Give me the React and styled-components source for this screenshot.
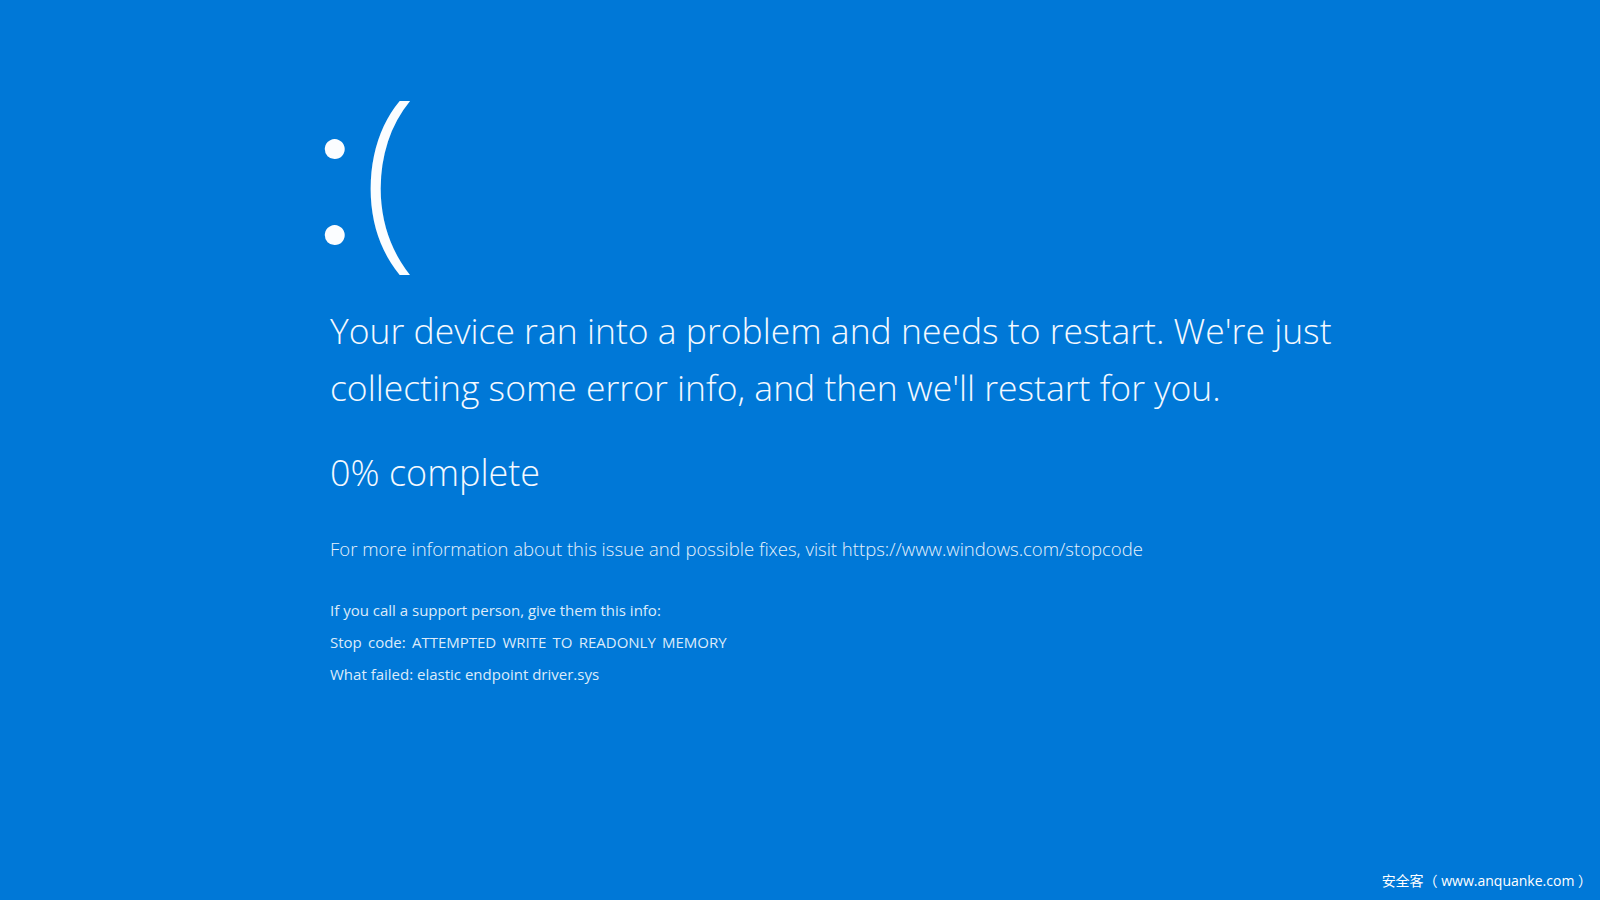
import styled, { createGlobalStyle } from 'styled-components'

const GlobalStyle = createGlobalStyle`
  html, body {
    margin: 0;
    padding: 0;
    background: #0078d7;
  }
  body {
    font-family: "Open Sans", "Noto Sans", sans-serif;
    color: #f4f9ff;
  }
`

const Screen = styled.div`
  position: relative;
  width: 1600px;
  height: 900px;
  overflow: hidden;
  background: #0078d7;
  box-sizing: border-box;
  padding: 68px 0 0 330px;
  display: flex;
  flex-direction: column;
`

const Face = styled.div`
  display: flex;
  align-items: center;
  height: 200px;
  font-weight: 300;
  line-height: 1;
  color: #fbfdff;
  user-select: none;
`

const Eyes = styled.span`
  font-family: Lato, "Open Sans", sans-serif;
  font-weight: 300;
  font-size: 215px;
  margin: -16px 0 0 -21px;
`

const Mouth = styled.span`
  font-size: 199px;
  margin: -6px 0 0 2px;
`

const Message = styled.p`
  margin: 34px 0 0;
  font-size: 35.5px;
  font-weight: 300;
  line-height: 57px;
  white-space: nowrap;
`

const Progress = styled.p`
  margin: 37px 0 0;
  font-size: 36px;
  font-weight: 300;
  line-height: 40px;
`

const MoreInfo = styled.p`
  margin: 46px 0 0;
  font-size: 18.5px;
  font-weight: 300;
  line-height: 20px;
  color: #e6f1fc;
`

const Details = styled.div`
  margin-top: 35px;
  display: flex;
  flex-direction: column;
`

const Detail = styled.p`
  margin: 0;
  font-size: 15px;
  line-height: 32px;
  color: #dcebfa;
  word-spacing: ${(p) => (p.$wide ? '2.3px' : '0')};
`

const Watermark = styled.span`
  position: absolute;
  right: 8px;
  bottom: 10px;
  font-family: "Open Sans", "Noto Sans CJK SC", sans-serif;
  font-size: 14px;
  color: #ffffff;
  white-space: pre;
`

export default function App() {
  return (
    <>
      <GlobalStyle />
      <Screen>
        <Face>
          <Eyes>:</Eyes>
          <Mouth>(</Mouth>
        </Face>
        <Message>
          Your device ran into a problem and needs to restart. We're just
          <br />
          collecting some error info, and then we'll restart for you.
        </Message>
        <Progress>0% complete</Progress>
        <MoreInfo>
          For more information about this issue and possible fixes, visit https://www.windows.com/stopcode
        </MoreInfo>
        <Details>
          <Detail>If you call a support person, give them this info:</Detail>
          <Detail $wide>Stop code: ATTEMPTED WRITE TO READONLY MEMORY</Detail>
          <Detail>What failed: elastic endpoint driver.sys</Detail>
        </Details>
        <Watermark>安全客（ www.anquanke.com ）</Watermark>
      </Screen>
    </>
  )
}
